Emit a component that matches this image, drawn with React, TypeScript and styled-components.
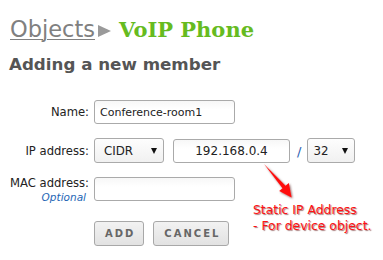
import React from "react";
import styled, { createGlobalStyle } from "styled-components";

const Global = createGlobalStyle`
  html, body { margin: 0; padding: 0; background: #fff; }
  body { font-family: "DejaVu Sans", Verdana, sans-serif; }
`;

const Page = styled.div`
  position: relative;
  width: 383px;
  height: 260px;
  padding: 16px 0 0 9px;
  box-sizing: border-box;
  overflow: hidden;
`;

const Title = styled.h1`
  display: flex;
  align-items: baseline;
  margin: 0;
  padding-left: 1px;
  font-weight: normal;
  font-size: 22.5px;
  line-height: 26px;
`;

const Crumb = styled.a`
  color: #808080;
  text-decoration: underline;
  text-decoration-thickness: 1px;
  text-underline-offset: 2px;
`;

const Sep = styled.span`
  display: inline-block;
  width: 0;
  height: 0;
  border-top: 6.5px solid transparent;
  border-bottom: 6.5px solid transparent;
  border-left: 13px solid #9a9a9a;
  margin: 0 8px 0 3px;
  align-self: center;
  transform: translateY(1px);
`;

const Current = styled.span`
  font-family: "DejaVu Serif", serif;
  font-weight: bold;
  font-size: 21px;
  color: #66bb1f;
`;

const Subtitle = styled.h2`
  margin: 10px 0 0 0;
  font-weight: bold;
  font-size: 16.7px;
  line-height: 22px;
  color: #555;
`;

const Form = styled.div`
  display: flex;
  flex-direction: column;
  margin-top: 25px;
`;

const Row = styled.div<{ $top?: boolean; $gap?: number }>`
  display: flex;
  align-items: ${(p) => (p.$top ? "flex-start" : "center")};
  margin-bottom: ${(p) => p.$gap ?? 0}px;
`;

const Label = styled.div`
  width: 80px;
  margin-right: 5px;
  text-align: right;
  font-size: 11.6px;
  line-height: 14px;
  color: #222;
`;

const Hint = styled.div`
  font-style: italic;
  font-size: 10.5px;
  line-height: 13px;
  color: #2465b5;
  padding-right: 3px;
  margin-top: 1px;
`;

const Input = styled.div<{ $w: number; $center?: boolean; $size?: number }>`
  box-sizing: border-box;
  width: ${(p) => p.$w}px;
  height: 24px;
  border: 1px solid #aaa;
  border-radius: 3px;
  background: linear-gradient(#f7f7f7, #fff 40%);
  padding: 0 5px;
  display: flex;
  align-items: center;
  justify-content: ${(p) => (p.$center ? "center" : "flex-start")};
  font-size: ${(p) => p.$size ?? 11}px;
  color: #222;
  white-space: nowrap;
`;

const Select = styled.div<{ $w: number }>`
  box-sizing: border-box;
  width: ${(p) => p.$w}px;
  height: 25px;
  border: 1px solid #aaa;
  border-radius: 3px;
  background: linear-gradient(#fdfdfd, #f1f1f1);
  padding: 0 6px 0 9px;
  display: flex;
  align-items: center;
  justify-content: space-between;
  font-size: 11.8px;
  color: #222;
`;

const Caret = styled.span`
  width: 0;
  height: 0;
  border-left: 3px solid transparent;
  border-right: 3px solid transparent;
  border-top: 6px solid #111;
`;

const Slash = styled.span`
  font-size: 13px;
  color: #2a5db0;
  margin: 2px 6px 0 7px;
`;

const Buttons = styled.div`
  display: flex;
  gap: 9px;
  margin-left: 85px;
  margin-top: 17px;
`;

const Button = styled.button`
  box-sizing: border-box;
  height: 25px;
  padding: 0 8px 0 10px;
  border: 1px solid #a8a8a8;
  border-radius: 3px;
  background: linear-gradient(#f2f2f2, #e2e2e2);
  color: #666;
  font-family: "DejaVu Sans", sans-serif;
  font-weight: bold;
  font-size: 10px;
  letter-spacing: 2px;
`;

const Note = styled.div`
  position: absolute;
  left: 253px;
  top: 202px;
  font-size: 12.4px;
  line-height: 16px;
  color: #ff1212;
  text-shadow: 1px 1px 1px rgba(90, 0, 0, 0.55), 0 0 1px #fff;
  white-space: nowrap;
`;

const Arrow = styled.svg`
  position: absolute;
  left: 0;
  top: 0;
  overflow: visible;
  pointer-events: none;
`;

export default function App() {
  return (
    <>
      <Global />
      <Page>
        <Title>
          <Crumb>Objects</Crumb>
          <Sep />
          <Current>VoIP Phone</Current>
        </Title>
        <Subtitle>Adding a new member</Subtitle>
        <Form>
          <Row $gap={14}>
            <Label>Name:</Label>
            <Input $w={141}>Conference-room1</Input>
          </Row>
          <Row $gap={13}>
            <Label>IP address:</Label>
            <Select $w={70}>
              CIDR
              <Caret />
            </Select>
            <Input $w={117} $center $size={12} style={{ marginLeft: 9 }}>
              192.168.0.4
            </Input>
            <Slash>/</Slash>
            <Select $w={48} style={{ paddingLeft: 5 }}>
              32
              <Caret />
            </Select>
          </Row>
          <Row $top>
            <Label>
              MAC address:
              <Hint>Optional</Hint>
            </Label>
            <Input $w={141} style={{ marginTop: 1 }} />
          </Row>
        </Form>
        <Buttons>
          <Button>ADD</Button>
          <Button>CANCEL</Button>
        </Buttons>
        <Arrow width="383" height="260" viewBox="0 0 383 260">
          <defs>
            <filter id="sh" x="-50%" y="-50%" width="200%" height="200%">
              <feDropShadow dx="1" dy="1" stdDeviation="0.8" floodColor="#400" floodOpacity="0.6" />
            </filter>
          </defs>
          <polygon
            points="264,164 285.5,185.7 288.8,183 291.6,197.5 279.2,191 282.5,188.3"
            fill="#ff1010"
            filter="url(#sh)"
          />
        </Arrow>
        <Note>
          Static IP Address
          <br />- For device object.
        </Note>
      </Page>
    </>
  );
}
